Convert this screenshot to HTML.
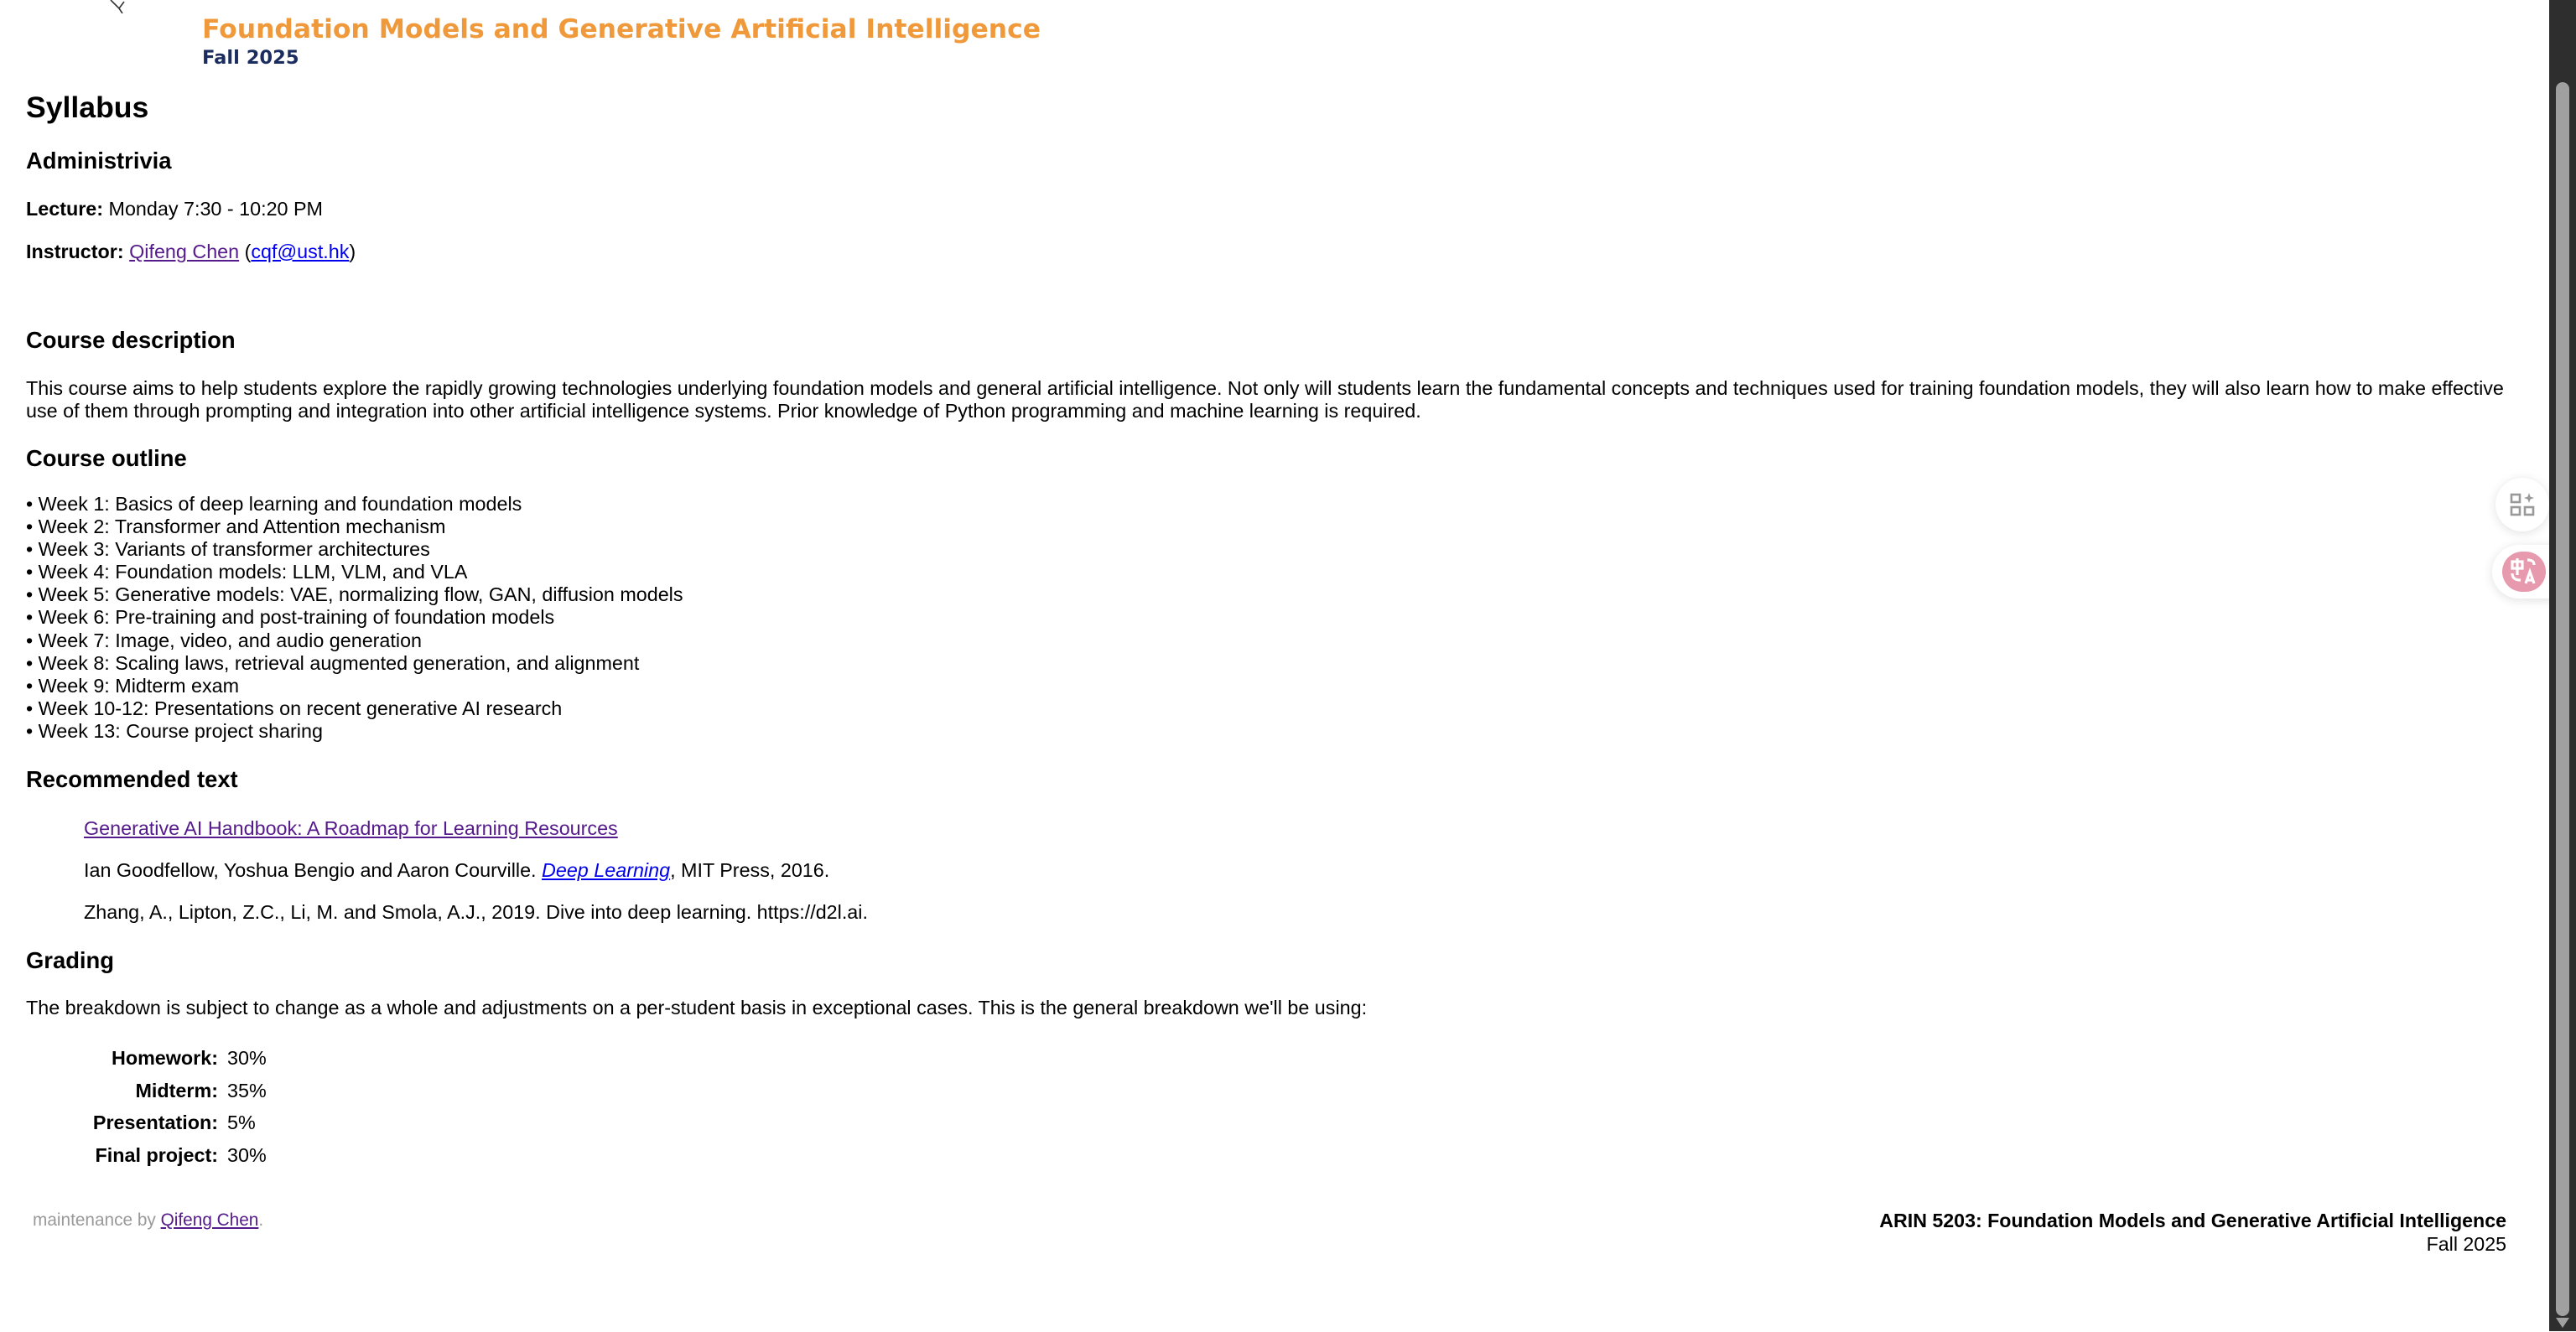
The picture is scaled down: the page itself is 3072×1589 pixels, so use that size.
<!DOCTYPE html>
<html><head><meta charset="utf-8"><style>
html{zoom:2}
html,body{margin:0;padding:0;background:#fff;overflow:hidden}
body{width:1536px;height:794px;position:relative;font-family:"Liberation Sans",Arial,sans-serif;font-size:11.67px;color:#000}
.a{position:absolute;white-space:nowrap;line-height:16px}
b{font-weight:bold}
a.v{color:#551a8b;text-decoration:underline}
a.u{color:#0000ee;text-decoration:underline}
.h1{font-size:17.8px;font-weight:bold;line-height:22px}
.h3{font-size:13.7px;font-weight:bold;line-height:18px}
.ttl{font-family:"DejaVu Sans",Verdana,sans-serif;font-weight:bold;color:#f0993a;font-size:15.7px;line-height:20px}
.sub{font-family:"DejaVu Sans",Verdana,sans-serif;font-weight:bold;color:#1a2d5e;font-size:11.3px;line-height:14px}
.wk{position:absolute;left:15.5px;top:294px;line-height:13.55px;white-space:nowrap}
</style></head><body>
<svg class="a" style="left:64px;top:0" width="14" height="8" viewBox="0 0 14 8"><path d="M2 0 L7 5 L10 1 M7 5 L9 8" stroke="#333" stroke-width="0.8" fill="none"/></svg>
<div class="a ttl" style="left:120.5px;top:7.5px">Foundation Models and Generative Artificial Intelligence</div>
<div class="a sub" style="left:120.5px;top:27.5px">Fall 2025</div>
<div class="a h1" style="left:15.5px;top:53px">Syllabus</div>
<div class="a h3" style="left:15.5px;top:87px">Administrivia</div>
<div class="a" style="left:15.5px;top:116.5px"><b>Lecture:</b> Monday 7:30 - 10:20 PM</div>
<div class="a" style="left:15.5px;top:142px"><b>Instructor:</b> <a class="v">Qifeng Chen</a> (<a class="u">cqf@ust.hk</a>)</div>
<div class="a h3" style="left:15.5px;top:194px">Course description</div>
<div class="a" style="left:15.5px;top:225px;line-height:13.5px;white-space:normal;width:1492px">This course aims to help students explore the rapidly growing technologies underlying foundation models and general artificial intelligence. Not only will students learn the fundamental concepts and techniques used for training foundation models, they will also learn how to make effective use of them through prompting and integration into other artificial intelligence systems. Prior knowledge of Python programming and machine learning is required.</div>
<div class="a h3" style="left:15.5px;top:264.5px">Course outline</div>
<div class="wk">• Week 1: Basics of deep learning and foundation models<br>• Week 2: Transformer and Attention mechanism<br>• Week 3: Variants of transformer architectures<br>• Week 4: Foundation models: LLM, VLM, and VLA<br>• Week 5: Generative models: VAE, normalizing flow, GAN, diffusion models<br>• Week 6: Pre-training and post-training of foundation models<br>• Week 7: Image, video, and audio generation<br>• Week 8: Scaling laws, retrieval augmented generation, and alignment<br>• Week 9: Midterm exam<br>• Week 10-12: Presentations on recent generative AI research<br>• Week 13: Course project sharing</div>
<div class="a h3" style="left:15.5px;top:456px">Recommended text</div>
<div class="a" style="left:50px;top:486px"><a class="v">Generative AI Handbook: A Roadmap for Learning Resources</a></div>
<div class="a" style="left:50px;top:511px">Ian Goodfellow, Yoshua Bengio and Aaron Courville. <a class="u"><i>Deep Learning</i></a>, MIT Press, 2016.</div>
<div class="a" style="left:50px;top:536px">Zhang, A., Lipton, Z.C., Li, M. and Smola, A.J., 2019. Dive into deep learning. https://d2l.ai.</div>
<div class="a h3" style="left:15.5px;top:564px">Grading</div>
<div class="a" style="left:15.5px;top:593px">The breakdown is subject to change as a whole and adjustments on a per-student basis in exceptional cases. This is the general breakdown we'll be using:</div>
<div class="a" style="left:0;top:623px;width:130px;text-align:right;font-weight:bold">Homework:</div><div class="a" style="left:135.5px;top:623px">30%</div>
<div class="a" style="left:0;top:642.5px;width:130px;text-align:right;font-weight:bold">Midterm:</div><div class="a" style="left:135.5px;top:642.5px">35%</div>
<div class="a" style="left:0;top:661.5px;width:130px;text-align:right;font-weight:bold">Presentation:</div><div class="a" style="left:135.5px;top:661.5px">5%</div>
<div class="a" style="left:0;top:681px;width:130px;text-align:right;font-weight:bold">Final project:</div><div class="a" style="left:135.5px;top:681px">30%</div>
<div class="a" style="left:19.5px;top:720px;font-size:10.4px;color:#999">maintenance by <a class="v">Qifeng Chen</a>.</div>
<div class="a" style="right:41.5px;top:721px;text-align:right;font-weight:bold;font-size:11.6px;line-height:14px">ARIN 5203: Foundation Models and Generative Artificial Intelligence</div>
<div class="a" style="right:41.5px;top:735px;text-align:right;font-size:11.6px;line-height:14px">Fall 2025</div>
<div class="a" style="left:1488px;top:285px;width:32px;height:32px;border-radius:16px;background:#fff;box-shadow:0 1px 6px rgba(0,0,0,.12)"></div>
<svg class="a" style="left:1496px;top:293px" width="16" height="16" viewBox="0 0 16 16"><g fill="none" stroke="#999" stroke-width="1.3"><rect x="1.5" y="2" width="5" height="4.5"/><rect x="1.5" y="9.5" width="5" height="4.5"/><rect x="9.5" y="9.5" width="5" height="4.5"/></g><path d="M12 1 L12.8 3.3 L15 4 L12.8 4.8 L12 7 L11.2 4.8 L9 4 L11.2 3.3Z" fill="#999"/></svg>
<div class="a" style="left:1486px;top:325px;width:40px;height:32px;border-radius:16px 0 0 16px;background:#fff;box-shadow:0 1px 6px rgba(0,0,0,.12)"></div>
<div class="a" style="left:1492px;top:329px;width:26px;height:24px;border-radius:12px;background:#e79aad"></div>
<svg class="a" style="left:1496px;top:332px" width="18" height="18" viewBox="0 0 18 18"><g fill="none" stroke="#fff" stroke-width="1.6"><rect x="2" y="3" width="6" height="4"/><path d="M5 1v10 M2 10c0 3 2 4 5 4 M11 2c3 0 4 1 4 3 M10 16l2.5-7 2.5 7 M11 14h3"/></g></svg>
<div class="a" style="left:1520px;top:0;width:16px;height:794px;background:#2e2e2e"></div>
<div class="a" style="left:1524px;top:49px;width:8px;height:736px;border-radius:4px;background:#a0a0a0"></div>
<div class="a" style="left:1524px;top:786px;width:0;height:0;border-left:4px solid transparent;border-right:4px solid transparent;border-top:6px solid #a0a0a0"></div>
</body></html>
